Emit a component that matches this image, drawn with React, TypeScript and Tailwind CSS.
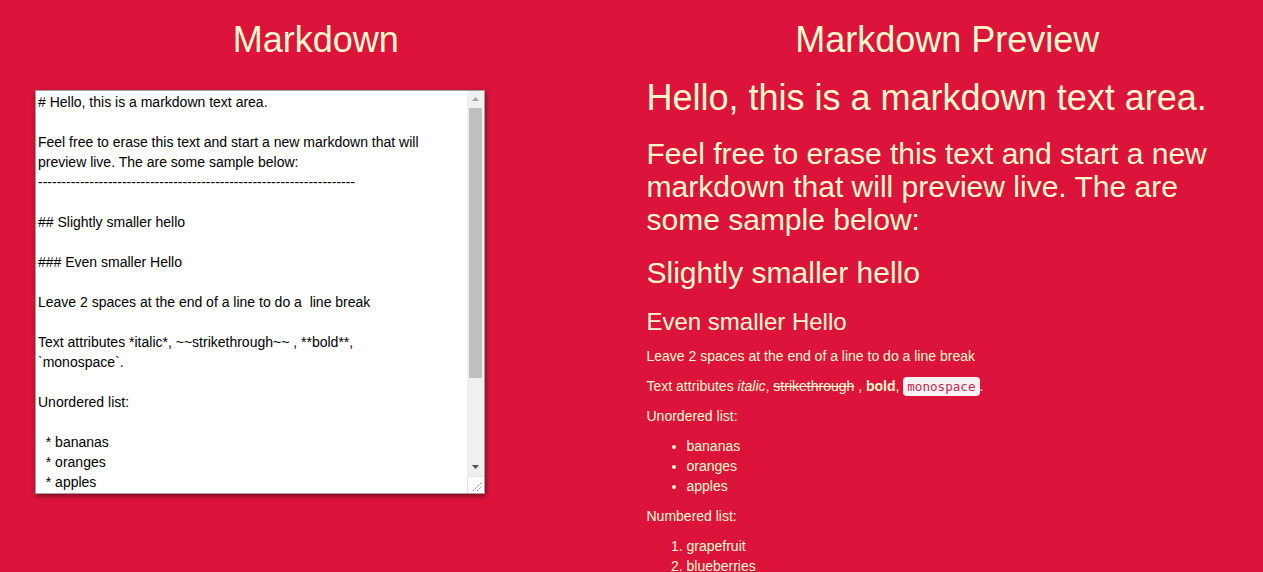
import { useState } from "react";

const initial = `# Hello, this is a markdown text area.

Feel free to erase this text and start a new markdown that will
preview live. The are some sample below:
--------------------------------------------------------------------

## Slightly smaller hello

### Even smaller Hello

Leave 2 spaces at the end of a line to do a  line break

Text attributes *italic*, ~~strikethrough~~ , **bold**,
\`monospace\`.

Unordered list:

  * bananas
  * oranges
  * apples

Numbered list:

  1. grapefruit
  2. blueberries
  3. lemons

*[Herman Fassett](https://freecodecamp.com/hermanfassett)*`;

function ScrollColumn() {
  return (
    <div className="w-[17px] shrink-0 flex flex-col bg-[#f0f0f0]">
      <div className="h-[17px] flex items-center justify-center">
        <svg width="7" height="4" viewBox="0 0 7 4">
          <path d="M3.5 0 L7 4 L0 4 Z" fill="#a3a3a3" />
        </svg>
      </div>
      <div className="flex-1 flex flex-col px-[2px]">
        <div className="h-[270px] bg-[#c0c0c0]" />
      </div>
      <div className="h-[17px] flex items-center justify-center">
        <svg width="7" height="4" viewBox="0 0 7 4">
          <path d="M0 0 L7 0 L3.5 4 Z" fill="#505050" />
        </svg>
      </div>
      <div className="h-[17px] bg-white border-t border-l border-[#e6e6e6] flex items-end justify-end">
        <svg width="12" height="12" viewBox="0 0 12 12" className="mb-[1px] mr-[1px]">
          <path d="M2 11 L11 2 M6 11 L11 6" stroke="#7a7a7a" strokeWidth="1" strokeDasharray="1.4 1" />
        </svg>
      </div>
    </div>
  );
}

export default function App() {
  const [text, setText] = useState(initial);

  return (
    <div className="h-[572px] overflow-hidden bg-[#dc143c] text-[#fffacd] font-['Liberation_Sans',Arial,sans-serif] text-[14px] leading-[20px]">
      <div className="flex flex-row">
        <div className="w-1/2 px-[15px] flex flex-col">
          <h1 className="mt-[20px] mb-[10px] text-center text-[36px] leading-[1.1] font-normal">Markdown</h1>
          <div className="mt-[20px] ml-[20px] w-[450px] h-[404px] flex flex-row bg-white border border-[#a0a0a0] shadow-[1px_2px_5px_rgba(0,0,0,0.45)]">
            <textarea
              className="flex-1 min-w-0 h-full resize-none bg-white text-black border-0 p-[2px] pt-[1px] text-[14px] leading-[20px] font-['Liberation_Sans',Arial,sans-serif] overflow-y-scroll outline-none"
              value={text}
              onChange={(e) => setText(e.target.value)}
            />
            <ScrollColumn />
          </div>
        </div>
        <div className="w-1/2 px-[15px] flex flex-col">
          <h1 className="mt-[20px] mb-[10px] text-center text-[36px] leading-[1.1] font-normal">Markdown Preview</h1>
          <div className="mt-[8px]">
            <h1 className="mt-0 mb-[10px] text-[36px] leading-[1.1]">Hello, this is a markdown text area.</h1>
            <h2 className="mt-[20px] mb-[10px] text-[30px] leading-[1.1]">
              Feel free to erase this text and start a new markdown that will preview live. The are some sample below:
            </h2>
            <h2 className="mt-[20px] mb-[10px] text-[30px] leading-[1.1]">Slightly smaller hello</h2>
            <h3 className="mt-[20px] mb-[10px] text-[24px] leading-[1.1]">Even smaller Hello</h3>
            <p className="mb-[10px]">Leave 2 spaces at the end of a line to do a line break</p>
            <p className="mb-[10px]">
              Text attributes <em>italic</em>, <del>strikethrough</del> , <strong>bold</strong>,{" "}
              <code className="px-[4px] py-[2px] text-[90%] leading-none text-[#c7254e] bg-[#f9f2f4] rounded-[4px] font-['DejaVu_Sans_Mono',monospace]">
                monospace
              </code>
              .
            </p>
            <p className="mb-[10px]">Unordered list:</p>
            <ul className="mb-[10px] pl-[40px] list-disc">
              <li>bananas</li>
              <li>oranges</li>
              <li>apples</li>
            </ul>
            <p className="mb-[10px]">Numbered list:</p>
            <ol className="mb-[10px] pl-[40px] list-decimal">
              <li>grapefruit</li>
              <li>blueberries</li>
              <li>lemons</li>
            </ol>
          </div>
        </div>
      </div>
    </div>
  );
}
